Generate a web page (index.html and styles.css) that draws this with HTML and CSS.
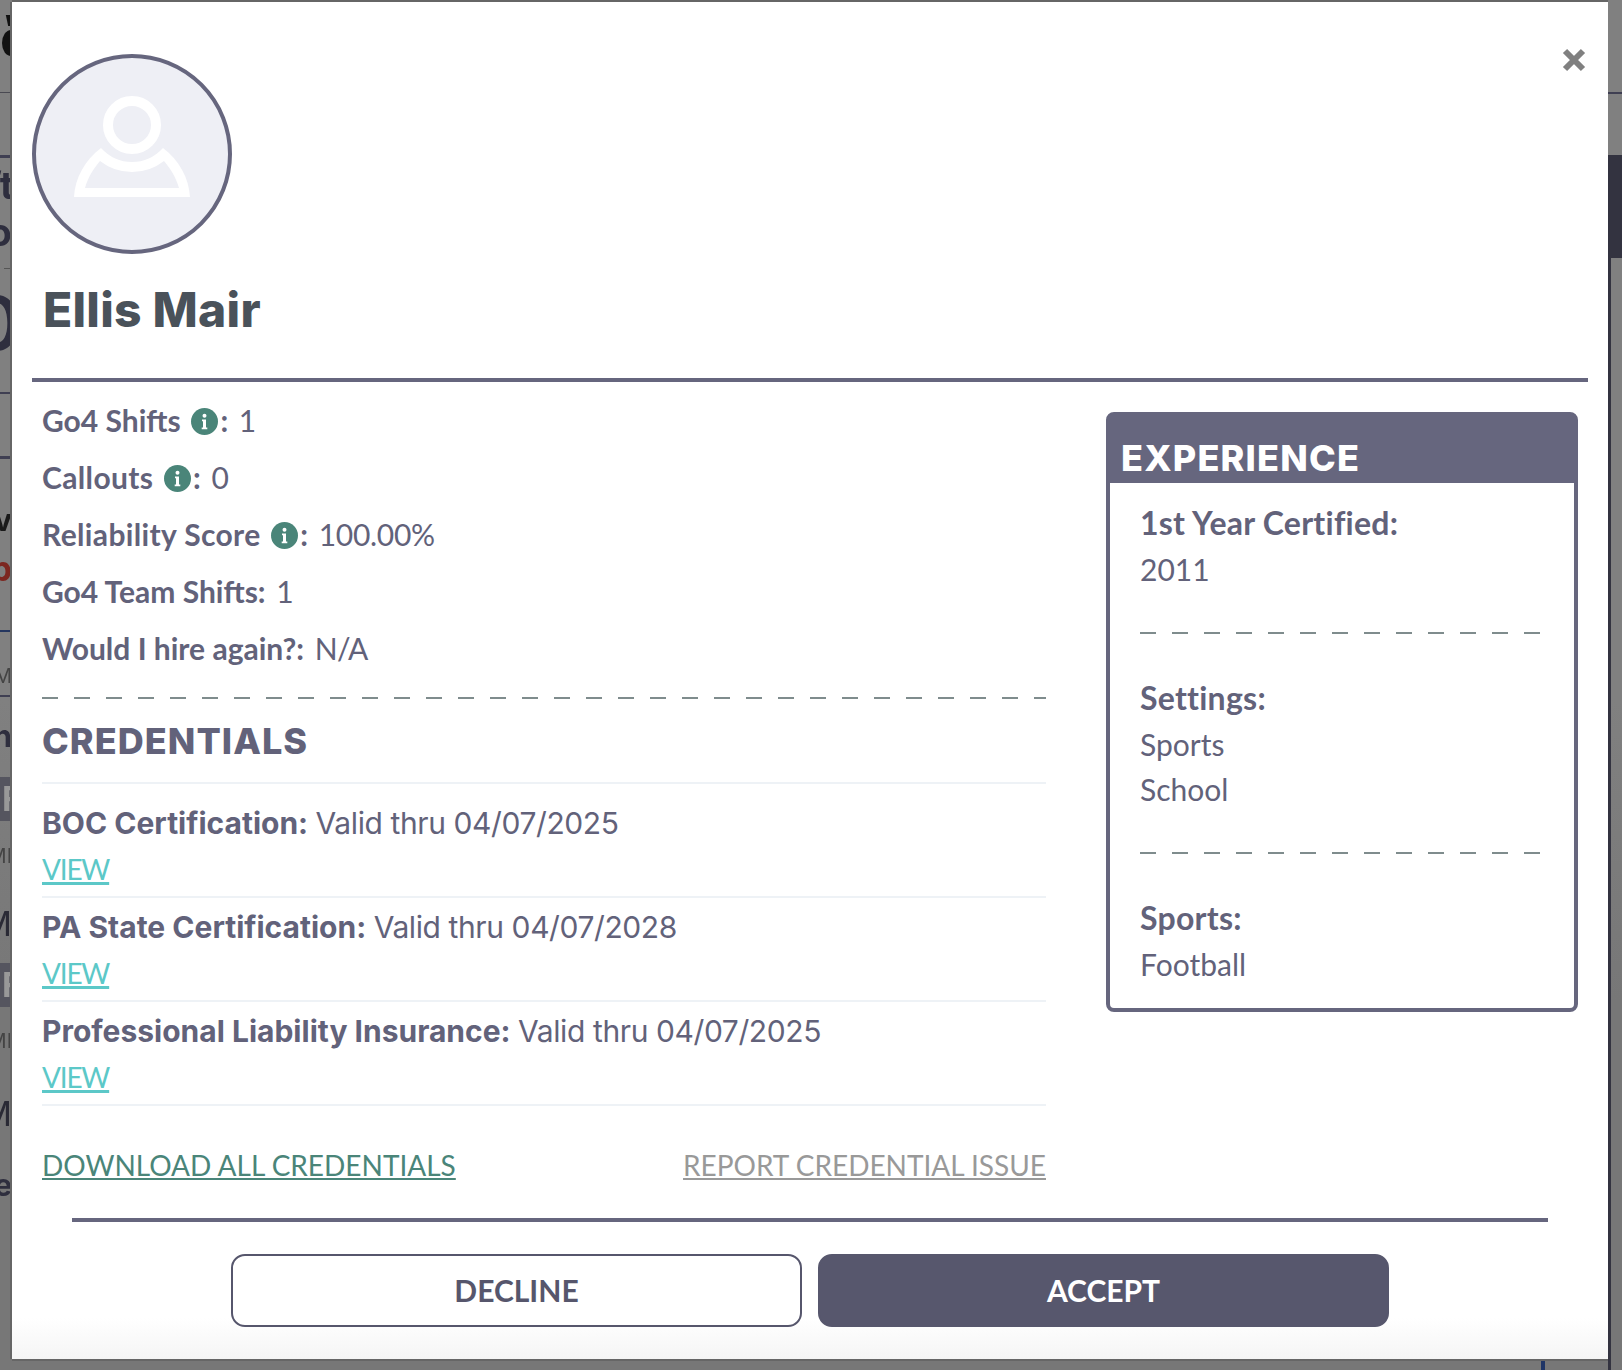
FILE: index.html
```html
<!DOCTYPE html>
<html lang="en">
<head>
<meta charset="utf-8">
<title>Ellis Mair</title>
<link rel="stylesheet" href="styles.css">
</head>
<body>
<div class="backdrop">
  <div class="behind" aria-hidden="true">
    <i class="speck speck-a"></i><i class="speck speck-b"></i><i class="speck speck-c"></i>
    <i class="logo-blob"></i><i class="logo-tick"></i>
    <i class="line line-a"></i><i class="line line-b"></i><i class="line line-c"></i><i class="line line-d"></i><i class="line line-e"></i><i class="line line-f"></i><i class="line line-g"></i>
    <span class="frag frag-ft">ft</span>
    <span class="frag frag-ol">ol</span>
    <span class="frag frag-zero">0</span>
    <span class="frag frag-v">v:</span>
    <span class="frag frag-p">p</span>
    <span class="frag frag-m1">M</span>
    <span class="frag frag-n">n:</span>
    <span class="frag frag-block frag-block-a">F</span>
    <span class="frag frag-m2">MI</span>
    <span class="frag frag-slash frag-slash-a">M</span>
    <span class="frag frag-block frag-block-b">F</span>
    <span class="frag frag-m3">MI</span>
    <span class="frag frag-slash frag-slash-b">M</span>
    <span class="frag frag-e">e</span>
    <i class="side-band"></i><i class="side-line"></i><i class="side-rule"></i><i class="blue-tick"></i>
  </div>

  <main class="modal">
    <button class="close" aria-label="Close">
      <svg width="24" height="24" viewBox="0 0 24 24"><path d="M3 3 21 21M21 3 3 21" stroke="#808080" stroke-width="6" fill="none"/></svg>
    </button>

    <header class="profile">
      <svg class="avatar" width="200" height="200" viewBox="32 54 200 200">
        <circle cx="132" cy="154" r="98" fill="#eeeff5" stroke="#66667e" stroke-width="4"/>
        <circle cx="132" cy="125" r="24" fill="none" stroke="#ffffff" stroke-width="10"/>
        <path fill="#ffffff" fill-rule="evenodd" d="M74 197C75 178 85 160 101 148Q114 162 132 162Q150 162 163 148C179 160 189 178 190 197ZM85 188H179C176 177 170 168 164 161Q150 172 132 172Q114 172 100 161C94 168 88 177 85 188Z"/>
      </svg>
      <h1 class="name">Ellis Mair</h1>
    </header>

    <div class="columns">
      <section class="main-col">
        <p class="stat"><b>Go4 Shifts</b>
          <svg class="info" width="27" height="27" viewBox="0 0 27 27"><circle cx="13.5" cy="13.5" r="13.5" fill="#4a8579"/><circle cx="13.5" cy="7.7" r="2" fill="#fff"/><path d="M11 11.5h4v8h1.3v1.7h-5.6v-1.7H12v-6.3h-1z" fill="#fff"/></svg><b class="colon">:</b> <span class="val">1</span></p>
        <p class="stat"><b class="wide">Callouts</b>
          <svg class="info" width="27" height="27" viewBox="0 0 27 27"><circle cx="13.5" cy="13.5" r="13.5" fill="#4a8579"/><circle cx="13.5" cy="7.7" r="2" fill="#fff"/><path d="M11 11.5h4v8h1.3v1.7h-5.6v-1.7H12v-6.3h-1z" fill="#fff"/></svg><b class="colon">:</b> <span class="val">0</span></p>
        <p class="stat"><b class="wide">Reliability Score</b>
          <svg class="info" width="27" height="27" viewBox="0 0 27 27"><circle cx="13.5" cy="13.5" r="13.5" fill="#4a8579"/><circle cx="13.5" cy="7.7" r="2" fill="#fff"/><path d="M11 11.5h4v8h1.3v1.7h-5.6v-1.7H12v-6.3h-1z" fill="#fff"/></svg><b class="colon">:</b> <span class="val val-tight">100.00%</span></p>
        <p class="stat"><b>Go4 Team Shifts:</b> <span class="val">1</span></p>
        <p class="stat"><b>Would I hire again?:</b> <span class="val val-tighter">N/A</span></p>

        <div class="dash dash-main"></div>
        <h2 class="section-title">CREDENTIALS</h2>

        <ul class="creds">
          <li class="cred cred-first">
            <p class="cred-text"><b>BOC Certification:</b> <span class="cred-val">Valid thru 04/07/2025</span></p>
            <a class="view" href="#">VIEW</a>
          </li>
          <li class="cred">
            <p class="cred-text"><b>PA State Certification:</b> <span class="cred-val">Valid thru 04/07/2028</span></p>
            <a class="view" href="#">VIEW</a>
          </li>
          <li class="cred">
            <p class="cred-text"><b>Professional Liability Insurance:</b> <span class="cred-val">Valid thru 04/07/2025</span></p>
            <a class="view" href="#">VIEW</a>
          </li>
        </ul>

        <div class="cred-links">
          <a class="download" href="#">DOWNLOAD ALL CREDENTIALS</a>
          <a class="report" href="#">REPORT CREDENTIAL ISSUE</a>
        </div>
      </section>

      <aside class="experience">
        <h2 class="exp-title">EXPERIENCE</h2>
        <div class="exp-body">
          <h3 class="exp-label">1st Year Certified:</h3>
          <p class="exp-val">2011</p>
          <div class="dash dash-exp"></div>
          <h3 class="exp-label">Settings:</h3>
          <p class="exp-val">Sports</p>
          <p class="exp-val">School</p>
          <div class="dash dash-exp"></div>
          <h3 class="exp-label">Sports:</h3>
          <p class="exp-val">Football</p>
        </div>
      </aside>
    </div>

    <footer class="actions">
      <button class="btn btn-decline">DECLINE</button>
      <button class="btn btn-accept">ACCEPT</button>
    </footer>
  </main>
</div>
</body>
</html>
```

FILE: styles.css
```css
* { box-sizing: border-box; }
html, body { margin: 0; padding: 0; }
body { background: #7c7c7c; font-family: "Lato", "Liberation Sans", sans-serif; color: #62627a; }
p, h1, h2, h3, ul { margin: 0; padding: 0; }

.backdrop {
  position: relative;
  width: 1622px;
  height: 1370px;
  padding: 2px 14px 11px 12px;
  overflow: hidden;
  background: linear-gradient(#808080 0, #808080 700px, #777 1000px, #777 100%);
}

/* blurred page behind the dialog */
.behind { position: absolute; inset: 0; overflow: hidden; }
.behind i { position: absolute; display: block; }
.speck { top: 0; width: 13px; height: 2px; background: #111; }
.speck-a { left: 95px; } .speck-b { left: 147px; } .speck-c { left: 370px; }
.logo-blob { left: 2px; top: 30px; width: 18px; height: 26px; border-radius: 50%; background: #111; filter: blur(.6px); }
.logo-tick { left: 7px; top: 15px; width: 7px; height: 11px; background: #111; transform: skewX(12deg); }
.line { left: 0; width: 12px; height: 2px; background: #3f3f52; }
.line-a { top: 92px; height: 1px; background: #4a4a52; }
.line-b { top: 155px; height: 3px; }
.line-c { top: 268px; left: 4px; width: 8px; height: 1px; background: #555; }
.line-d { top: 392px; }
.line-e { top: 456px; height: 3px; }
.line-f { top: 630px; background: #24365f; }
.line-g { top: 695px; }
.frag { position: absolute; font-family: "Inter", "Liberation Sans", sans-serif; font-weight: 700; line-height: 1; color: #2e2e3e; filter: blur(.5px); white-space: nowrap; text-align: right; width: 12px; direction: rtl; }
.frag-ft { top: 166px; font-size: 38px; width: 14px; }
.frag-ol { top: 213px; font-size: 38px; width: 22px; }
.frag-zero { top: 286px; left: -28px; width: auto; font-size: 74px; font-weight: 600; }
.frag-v { top: 505px; font-size: 30px; color: #1a1a1a; }
.frag-p { top: 552px; font-size: 34px; color: #7c2720; }
.frag-m1 { top: 666px; font-size: 20px; font-weight: 400; color: #444; }
.frag-n { top: 721px; font-size: 30px; }
.frag-block { left: 0; width: 12px; background: #55555f; color: #999; font-size: 34px; line-height: 44px; text-align: left; direction: ltr; overflow: hidden; padding-left: 2px; height: 44px; }
.frag-block-a { top: 777px; }
.frag-block-b { top: 963px; }
.frag-m2 { top: 846px; font-size: 20px; font-weight: 400; color: #444; }
.frag-m3 { top: 1031px; font-size: 20px; font-weight: 400; color: #444; }
.frag-slash { font-size: 34px; font-weight: 400; color: #2a2a35; }
.frag-slash-a { top: 907px; }
.frag-slash-b { top: 1097px; }
.frag-e { top: 1170px; font-size: 30px; }
.side-band { left: 1608px; top: 155px; width: 14px; height: 103px; background: #333340; }
.side-line { left: 1608px; top: 258px; width: 3px; height: 1112px; background: #333340; }
.side-rule { left: 1608px; top: 92px; width: 14px; height: 2px; background: #3f3f52; }
.blue-tick { left: 1541px; top: 1359px; width: 4px; height: 11px; background: #1f3566; }

/* dialog */
.modal {
  position: relative;
  width: 1596px;
  height: 1357px;
  padding: 52px 20px 0;
  background: linear-gradient(#fff 0, #fff 1316px, #f5f5f5 100%);
  box-shadow: -2px 0 0 #666, 0 2px 0 #666, 0 -2px 0 #666;
}
.close { position: absolute; top: 46px; left: 1550px; width: 24px; height: 24px; padding: 0; border: 0; background: none; display: block; }
.close svg { display: block; }

.profile { height: 328px; border-bottom: 4px solid #66667e; }
.avatar { display: block; }
.name { margin: 24px 0 0 11px; font-family: "Inter", "Liberation Sans", sans-serif; font-size: 48px; line-height: 64px; font-weight: 800; color: #4a525a; letter-spacing: 0.25px; }

.columns { display: flex; justify-content: space-between; height: 836px; padding: 0 10px; }
.main-col { width: 1004px; padding-top: 10px; }
.stat { font-size: 30px; line-height: 57px; white-space: nowrap; }
.stat b { font-weight: 700; }
.stat .wide { letter-spacing: 0.36px; }
.val { font-weight: 400; margin-left: 3px; }
.val-tight { letter-spacing: -0.3px; }
.val-tighter { letter-spacing: -0.7px; }
.info { vertical-align: -3px; margin-left: 3px; }
.colon { margin-left: 2px; }

.dash {
  height: 2px;
  background: repeating-linear-gradient(90deg, #7f8c8d 0, #7f8c8d 16px, transparent 16px, transparent 32px);
}
.dash-main { margin-top: 20px; }
.section-title { margin-top: 20px; font-family: "Inter", "Liberation Sans", sans-serif; font-size: 36px; line-height: 44px; font-weight: 800; letter-spacing: 1.05px; color: #62627a; }
.creds { list-style: none; margin-top: 19px; border-top: 2px solid #eef2f6; }
.cred { height: 104px; border-bottom: 2px solid #eef2f6; padding-top: 5px; }
.cred-first { height: 114px; padding-top: 15px; }
.cred-text { font-family: "Inter", "Liberation Sans", sans-serif; font-size: 30px; line-height: 48px; white-space: nowrap; font-weight: 400; }
.cred-text b { font-weight: 700; margin-right: -1px; }
.cred-val { letter-spacing: -0.4px; }
.view { display: inline-block; font-size: 28px; line-height: 44px; letter-spacing: -1.2px; color: #5cc8c8; text-decoration: underline; text-decoration-thickness: 3px; text-underline-offset: 2px; }
.cred-links { display: flex; justify-content: space-between; margin-top: 37px; font-size: 28px; line-height: 44px; }
.download { color: #4a8579; text-decoration: underline; text-decoration-thickness: 2px; text-underline-offset: 2px; }
.report { color: #999; text-decoration: underline; text-decoration-thickness: 2px; text-underline-offset: 2px; }

.experience { width: 472px; height: 600px; margin-top: 30px; border: 4px solid #66667e; border-radius: 8px; }
.exp-title { height: 67px; padding: 20px 0 0 11px; background: #66667e; color: #fff; font-family: "Inter", "Liberation Sans", sans-serif; font-size: 36px; line-height: 44px; font-weight: 800; letter-spacing: 1.2px; }
.exp-body { padding: 16px 30px 0; }
.exp-label { font-size: 32px; line-height: 48px; font-weight: 700; letter-spacing: 0.25px; }
.exp-val { font-size: 30px; line-height: 45px; font-weight: 400; }
.dash-exp { width: 400px; margin: 40px 0 40px; }

.actions { margin-left: 40px; width: 1476px; height: 108px; padding-top: 32px; border-top: 4px solid #66667e; display: flex; justify-content: center; gap: 16px; }
.btn { width: 571px; height: 73px; padding-bottom: 3px; border-radius: 14px; font-family: "Lato", "Liberation Sans", sans-serif; font-size: 30px; font-weight: 700; cursor: pointer; }
.btn-decline { background: #fff; border: 2px solid #56566c; color: #56566c; }
.btn-accept { background: #57576d; border: 2px solid #57576d; color: #fff; }
```
